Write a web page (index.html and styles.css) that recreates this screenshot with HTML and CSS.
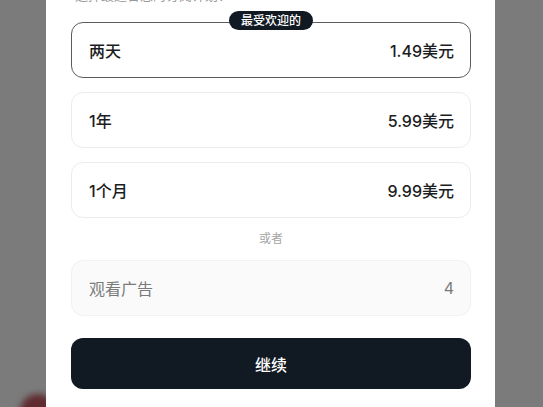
FILE: index.html
```html
<!DOCTYPE html>
<html lang="zh-CN">
<head>
<meta charset="utf-8">
<title>订阅</title>
<link rel="stylesheet" href="styles.css">
</head>
<body>
<div class="blob"></div>
<div class="modal">
  <p class="intro">选择最适合您的订阅计划：</p>
  <div class="plans">
    <div class="plan selected">
      <span class="badge">最受欢迎的</span>
      <span class="name">两天</span>
      <span class="price">1.49美元</span>
    </div>
    <div class="plan">
      <span class="name">1年</span>
      <span class="price">5.99美元</span>
    </div>
    <div class="plan">
      <span class="name">1个月</span>
      <span class="price">9.99美元</span>
    </div>
    <div class="or">或者</div>
    <div class="plan ad">
      <span class="name">观看广告</span>
      <span class="price">4</span>
    </div>
  </div>
  <button class="continue">继续</button>
</div>
</body>
</html>
```
FILE: styles.css
```css
html, body {
  margin: 0;
  padding: 0;
}
body {
  background: #7b7b7b;
  height: 407px;
  overflow: hidden;
  position: relative;
  font-family: "Inter", "Noto Sans CJK SC", sans-serif;
  color: #1b1d22;
}
.blob {
  position: absolute;
  left: 20px;
  top: 394px;
  width: 36px;
  height: 36px;
  border-radius: 50%;
  background: #5f2b30;
  filter: blur(3px);
}
.modal {
  position: relative;
  display: flow-root;
  margin-left: 46px;
  width: 449px;
  height: 407px;
  box-sizing: border-box;
  background: #ffffff;
  padding: 0 24px 0 25px;
}
.intro {
  margin: -15px 0 17px 4px;
  font-size: 13px;
  line-height: 20px;
  color: #9a9a9a;
  white-space: nowrap;
}
.plans {
  display: flex;
  flex-direction: column;
  gap: 14px;
}
.plan {
  position: relative;
  height: 56px;
  box-sizing: border-box;
  border: 1px solid #ececec;
  border-radius: 12px;
  display: flex;
  align-items: center;
  justify-content: space-between;
  padding: 0 16px 0 17px;
  font-size: 16px;
  font-weight: 500;
}
.plan.selected {
  border-color: #5c5c5c;
}
.badge {
  position: absolute;
  top: -12px;
  left: 50%;
  transform: translateX(-50%);
  height: 19px;
  line-height: 19px;
  padding: 0 12px;
  border-radius: 10px;
  background: #111923;
  color: #ffffff;
  font-size: 12px;
  font-weight: 500;
  white-space: nowrap;
}
.or {
  text-align: center;
  font-size: 12px;
  line-height: 14px;
  color: #a6a6a6;
}
.plan.ad {
  background: #fafafa;
  border-color: #f1f1f1;
  color: #7a7a7a;
  font-weight: 400;
}
.continue {
  display: block;
  width: 100%;
  height: 51px;
  margin-top: 22px;
  border: none;
  border-radius: 12px;
  background: #111923;
  color: #ffffff;
  font-family: "Inter", "Noto Sans CJK SC", sans-serif;
  font-size: 16px;
  font-weight: 500;
}
```
